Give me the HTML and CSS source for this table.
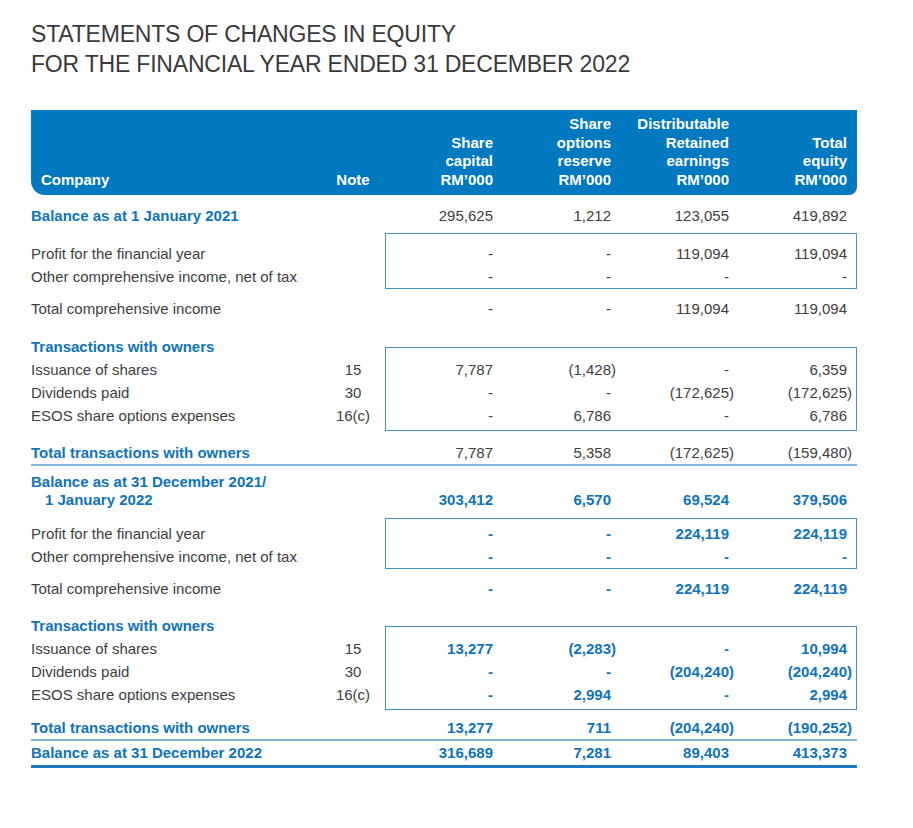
FILE: index.html
```html
<!DOCTYPE html>
<html lang="en">
<head>
<meta charset="utf-8">
<title>Statements of Changes in Equity</title>
<link rel="stylesheet" href="styles.css">
</head>
<body>
<div class="page">
  <h1 class="title">STATEMENTS OF CHANGES IN EQUITY<br>FOR THE FINANCIAL YEAR ENDED 31 DECEMBER 2022</h1>

  <div class="sheet">
    <div class="head">
      <div class="h-label">Company</div>
      <div class="h-note">Note</div>
      <div class="h-num">Share<br>capital<br>RM’000</div>
      <div class="h-num">Share<br>options<br>reserve<br>RM’000</div>
      <div class="h-num">Distributable<br>Retained<br>earnings<br>RM’000</div>
      <div class="h-num">Total<br>equity<br>RM’000</div>
    </div>

    <!-- 2021 -->
    <div class="row first">
      <div class="label strong">Balance as at 1 January 2021</div>
      <div class="note"></div>
      <div class="v">295,625</div>
      <div class="v">1,212</div>
      <div class="v">123,055</div>
      <div class="v">419,892</div>
    </div>

    <div class="group inc inc-a">
      <div class="labels">
        <div class="lrow"><div>Profit for the financial year</div><div class="note"></div></div>
        <div class="lrow"><div>Other comprehensive income, net of tax</div><div class="note"></div></div>
      </div>
      <div class="box">
        <div class="v">-</div><div class="v">-</div><div class="v">119,094</div><div class="v">119,094</div>
        <div class="v">-</div><div class="v">-</div><div class="v">-</div><div class="v">-</div>
      </div>
    </div>

    <div class="row tci">
      <div class="label">Total comprehensive income</div>
      <div class="note"></div>
      <div class="v">-</div>
      <div class="v">-</div>
      <div class="v">119,094</div>
      <div class="v">119,094</div>
    </div>

    <div class="group tx tx-a">
      <div class="labels">
        <div class="lrow"><div class="strong">Transactions with owners</div><div class="note"></div></div>
        <div class="lrow"><div>Issuance of shares</div><div class="note">15</div></div>
        <div class="lrow"><div>Dividends paid</div><div class="note">30</div></div>
        <div class="lrow"><div>ESOS share options expenses</div><div class="note">16(c)</div></div>
      </div>
      <div class="box">
        <div class="v">7,787</div><div class="v"><span class="neg">(1,428)</span></div><div class="v">-</div><div class="v">6,359</div>
        <div class="v">-</div><div class="v">-</div><div class="v"><span class="neg">(172,625)</span></div><div class="v"><span class="neg">(172,625)</span></div>
        <div class="v">-</div><div class="v">6,786</div><div class="v">-</div><div class="v">6,786</div>
      </div>
    </div>

    <div class="row total ttx-a">
      <div class="label strong">Total transactions with owners</div>
      <div class="note"></div>
      <div class="v">7,787</div>
      <div class="v">5,358</div>
      <div class="v"><span class="neg">(172,625)</span></div>
      <div class="v"><span class="neg">(159,480)</span></div>
    </div>

    <!-- 2022 -->
    <div class="row mid blue">
      <div class="label strong hang">Balance as at 31 December 2021/<br>1 January 2022</div>
      <div class="note"></div>
      <div class="v">303,412</div>
      <div class="v">6,570</div>
      <div class="v">69,524</div>
      <div class="v">379,506</div>
    </div>

    <div class="group inc inc-b blue">
      <div class="labels">
        <div class="lrow"><div>Profit for the financial year</div><div class="note"></div></div>
        <div class="lrow"><div>Other comprehensive income, net of tax</div><div class="note"></div></div>
      </div>
      <div class="box">
        <div class="v">-</div><div class="v">-</div><div class="v">224,119</div><div class="v">224,119</div>
        <div class="v">-</div><div class="v">-</div><div class="v">-</div><div class="v">-</div>
      </div>
    </div>

    <div class="row tci blue">
      <div class="label">Total comprehensive income</div>
      <div class="note"></div>
      <div class="v">-</div>
      <div class="v">-</div>
      <div class="v">224,119</div>
      <div class="v">224,119</div>
    </div>

    <div class="group tx tx-b blue">
      <div class="labels">
        <div class="lrow"><div class="strong">Transactions with owners</div><div class="note"></div></div>
        <div class="lrow"><div>Issuance of shares</div><div class="note">15</div></div>
        <div class="lrow"><div>Dividends paid</div><div class="note">30</div></div>
        <div class="lrow"><div>ESOS share options expenses</div><div class="note">16(c)</div></div>
      </div>
      <div class="box">
        <div class="v">13,277</div><div class="v"><span class="neg">(2,283)</span></div><div class="v">-</div><div class="v">10,994</div>
        <div class="v">-</div><div class="v">-</div><div class="v"><span class="neg">(204,240)</span></div><div class="v"><span class="neg">(204,240)</span></div>
        <div class="v">-</div><div class="v">2,994</div><div class="v">-</div><div class="v">2,994</div>
      </div>
    </div>

    <div class="row total ttx-b blue">
      <div class="label strong">Total transactions with owners</div>
      <div class="note"></div>
      <div class="v">13,277</div>
      <div class="v">711</div>
      <div class="v"><span class="neg">(204,240)</span></div>
      <div class="v"><span class="neg">(190,252)</span></div>
    </div>

    <div class="row closing blue">
      <div class="label strong">Balance as at 31 December 2022</div>
      <div class="note"></div>
      <div class="v">316,689</div>
      <div class="v">7,281</div>
      <div class="v">89,403</div>
      <div class="v">413,373</div>
    </div>
  </div>
</div>
</body>
</html>
```

FILE: styles.css
```css
* { box-sizing: border-box; }

html, body {
  margin: 0;
  background: #ffffff;
}

body {
  font-family: "Liberation Sans", Arial, Helvetica, sans-serif;
  font-size: 15px;
  color: #404040;
}

.page {
  padding: 19px 0 40px 31px;
}

.title {
  margin: 0;
  font-size: 23px;
  font-weight: 400;
  line-height: 30px;
  letter-spacing: -0.2px;
  color: #3a3a3a;
}

.sheet {
  width: 826px;
  margin-top: 31px;
}

/* header bar */
.head {
  display: grid;
  grid-template-columns: 290px 64px repeat(4, 118px);
  align-items: end;
  height: 85px;
  padding: 5px 0 6px;
  background: #0079c1;
  color: #ffffff;
  font-weight: 700;
  line-height: 18.5px;
  border-radius: 0 0 8px 14px;
}

.h-label { padding-left: 10px; }
.h-note { text-align: center; }
.h-num { text-align: right; padding-right: 10px; }

/* generic rows */
.row {
  display: grid;
  grid-template-columns: 290px 64px repeat(4, 118px);
  line-height: 23px;
}

.note { text-align: center; }

.v {
  text-align: right;
  padding-right: 10px;
  white-space: nowrap;
}

.neg { margin-right: -5px; }

.strong {
  font-weight: 700;
  color: #0f74ba;
}

.blue .v {
  font-weight: 700;
  color: #0f74ba;
}

/* boxed groups */
.group {
  display: grid;
  grid-template-columns: 354px 472px;
  align-items: start;
  line-height: 23px;
}

.lrow {
  display: grid;
  grid-template-columns: 290px 64px;
}

.box {
  display: grid;
  grid-template-columns: 117px 118px 118px 117px;
  border: 1px solid #4a90c8;
}

.box .v:nth-child(4n) { padding-right: 9px; }

/* vertical rhythm */
.row.first { margin-top: 9px; }

.inc .labels { padding-top: 9px; }
.inc .box { padding: 8px 0 0; }
.inc-a { margin-top: 6px; }
.inc-b { margin-top: 9px; }
.inc-b .labels { padding-top: 4.5px; }
.inc-b .box { padding-top: 3.5px; }

.row.tci { margin-top: 8px; }

.tx .box {
  margin-top: 12px;
  padding: 10px 0 3px;
}
.tx-a { margin-top: 15px; }
.tx-b { margin-top: 14px; }

.row.total { border-bottom: 2px solid #7fb8dc; }
.ttx-a { margin-top: 10px; }
.ttx-b { margin-top: 6px; }

.row.mid {
  margin-top: 6.5px;
  line-height: 18px;
  align-items: end;
}

.hang {
  padding-left: 14px;
  text-indent: -14px;
}

.row.closing {
  padding-bottom: 1px;
  border-bottom: 3px solid #1e78c0;
}
```
